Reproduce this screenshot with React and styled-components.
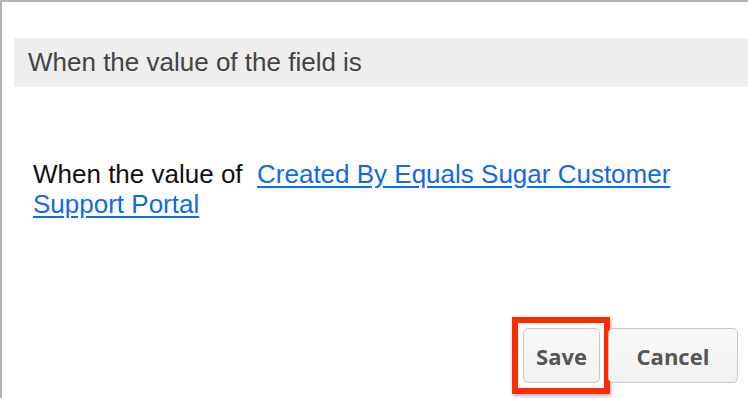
import styled, { createGlobalStyle } from "styled-components";

const Global = createGlobalStyle`
  html, body {
    margin: 0;
    padding: 0;
    background: #ffffff;
  }
`;

const Panel = styled.div`
  box-sizing: border-box;
  height: 398px;
  width: 748px;
  border-top: 2px solid #b4b4b4;
  border-left: 2px solid #b4b4b4;
  display: flex;
  flex-direction: column;
  font-family: "Liberation Sans", Arial, sans-serif;
  overflow: hidden;
`;

const Header = styled.div`
  margin: 36px 0 0 12px;
  height: 49px;
  background: #eeeeee;
  display: flex;
  align-items: center;
  padding-left: 14px;
  font-size: 26px;
  color: #444444;
`;

const Sentence = styled.p`
  margin: 72px 0 0 31px;
  width: 660px;
  font-size: 26px;
  line-height: 30px;
  color: #111111;
`;

const Link = styled.a`
  color: #1069e6;
  text-decoration: underline;
  text-underline-offset: 3px;
  cursor: pointer;
`;

const Actions = styled.div`
  margin-top: auto;
  margin-bottom: 15px;
  padding-right: 10px;
  display: flex;
  justify-content: flex-end;
  gap: 8px;
`;

const Button = styled.button`
  position: relative;
  box-sizing: border-box;
  width: ${(p) => p.$width}px;
  height: 55px;
  border: 1px solid #cacaca;
  border-radius: 5px;
  background: linear-gradient(#f9f9f9, #f1f1f1);
  font-family: "Open Sans", sans-serif;
  font-weight: 700;
  font-size: 22px;
  color: #555555;
  padding: 0;
  cursor: pointer;

  ${(p) =>
    p.$marked &&
    `
    &::after {
      content: "";
      position: absolute;
      left: -12px;
      right: -11px;
      top: -12px;
      bottom: -12px;
      border: 6px solid #ff2a00;
      box-shadow: 1px 2px 4px rgba(0, 0, 0, 0.3);
      pointer-events: none;
    }
  `}
`;

export default function App() {
  return (
    <>
      <Global />
      <Panel>
        <Header>When the value of the field is</Header>
        <Sentence>
          When the value of&nbsp; <Link>Created By Equals Sugar Customer Support Portal</Link>
        </Sentence>
        <Actions>
          <Button $width={77} $marked>
            Save
          </Button>
          <Button $width={130}>Cancel</Button>
        </Actions>
      </Panel>
    </>
  );
}
